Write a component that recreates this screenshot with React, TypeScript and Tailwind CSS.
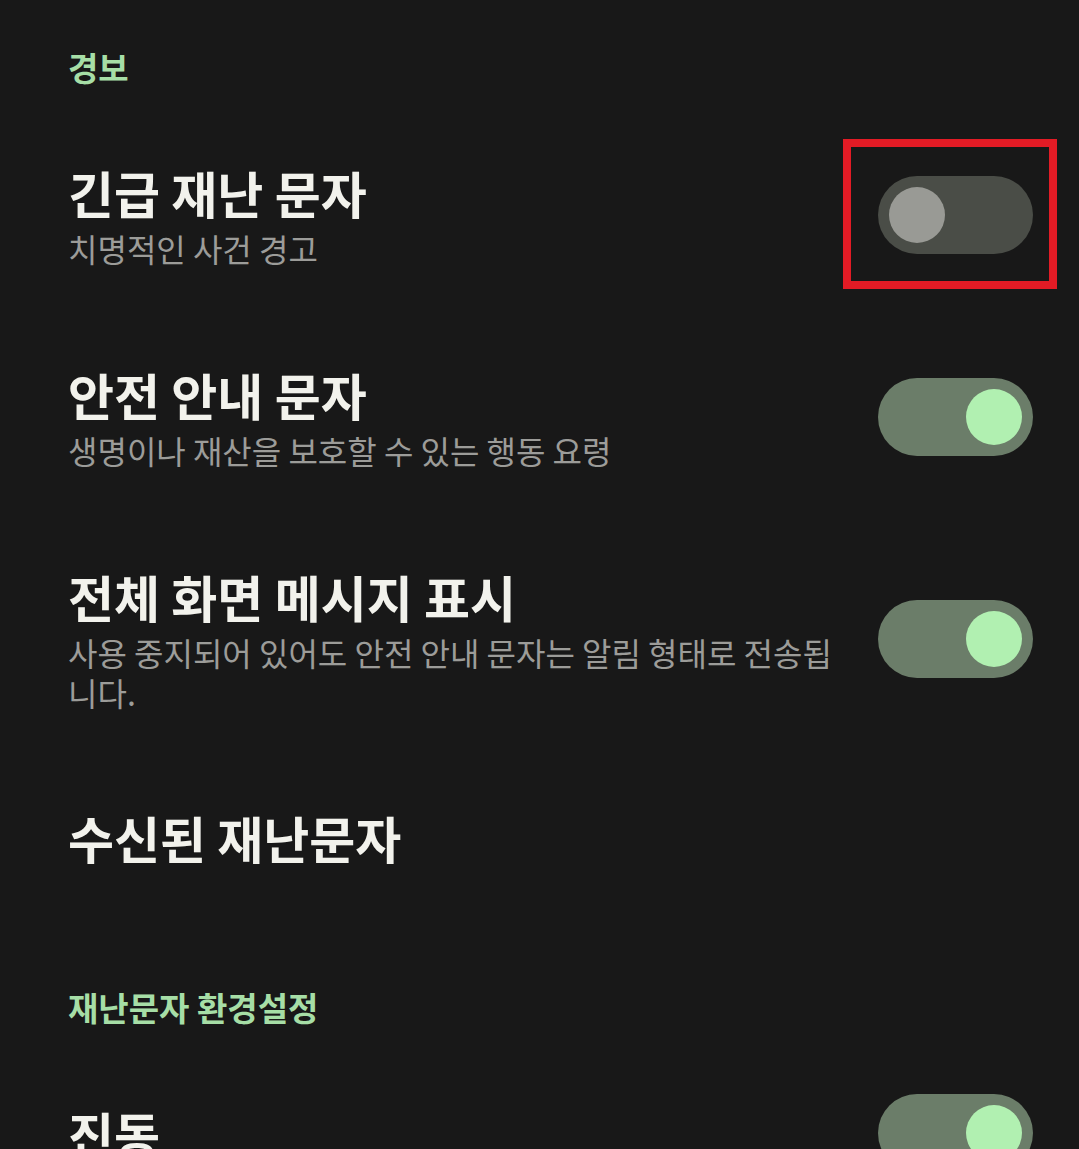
import React from 'react'

const font = { fontFamily: '"Noto Sans CJK KR", "Noto Sans", sans-serif' }

function Toggle({ on, marked }: { on: boolean; marked?: boolean }) {
  return (
    <div className="relative shrink-0">
      <div
        className={`flex h-[78px] w-[155px] items-center rounded-full px-[11px] ${
          on ? 'justify-end bg-[#6b7d69]' : 'justify-start bg-[#4a4d47]'
        }`}
      >
        <div className={`h-[56px] w-[56px] rounded-full ${on ? 'bg-[#b1f0b1]' : 'bg-[#999a95]'}`} />
      </div>
      {marked && (
        <div className="pointer-events-none absolute left-[-35px] top-[-37px] h-[150px] w-[214px] border-[8px] border-[#e31b25]" />
      )}
    </div>
  )
}

function Header({ children, className = '' }: { children: React.ReactNode; className?: string }) {
  return (
    <div className={`text-[33px] font-bold leading-[40px] text-[#a6dea6] ${className}`}>{children}</div>
  )
}

interface RowProps {
  title: string
  subtitle?: string
  on?: boolean
  toggle?: boolean
  marked?: boolean
  className?: string
}

function Row({ title, subtitle, on = false, toggle = true, marked, className = '' }: RowProps) {
  return (
    <div className={`flex items-center justify-between ${className}`}>
      <div className="w-[775px]">
        <div className="text-[50px] font-bold leading-[60px] text-[#f2f2ec]">{title}</div>
        {subtitle && (
          <div className="mt-[6px] text-[32px] leading-[40px] text-[#9c9c99]">{subtitle}</div>
        )}
      </div>
      {toggle && <Toggle on={on} marked={marked} />}
    </div>
  )
}

export default function App() {
  return (
    <div className="h-[1149px] w-[1079px] overflow-hidden bg-[#181818] pl-[68px] pr-[46px]" style={font}>
      <Header className="pt-[47px]">경보</Header>
      <Row title="긴급 재난 문자" subtitle="치명적인 사건 경고" marked className="mt-[75px]" />
      <Row title="안전 안내 문자" subtitle="생명이나 재산을 보호할 수 있는 행동 요령" on className="mt-[96px]" />
      <Row
        title="전체 화면 메시지 표시"
        subtitle="사용 중지되어 있어도 안전 안내 문자는 알림 형태로 전송됩니다."
        on
        className="mt-[96px]"
      />
      <Row title="수신된 재난문자" toggle={false} className="mt-[95px]" />
      <Header className="mt-[120px]">재난문자 환경설정</Header>
      <Row title="진동" on className="mt-[67px]" />
    </div>
  )
}
